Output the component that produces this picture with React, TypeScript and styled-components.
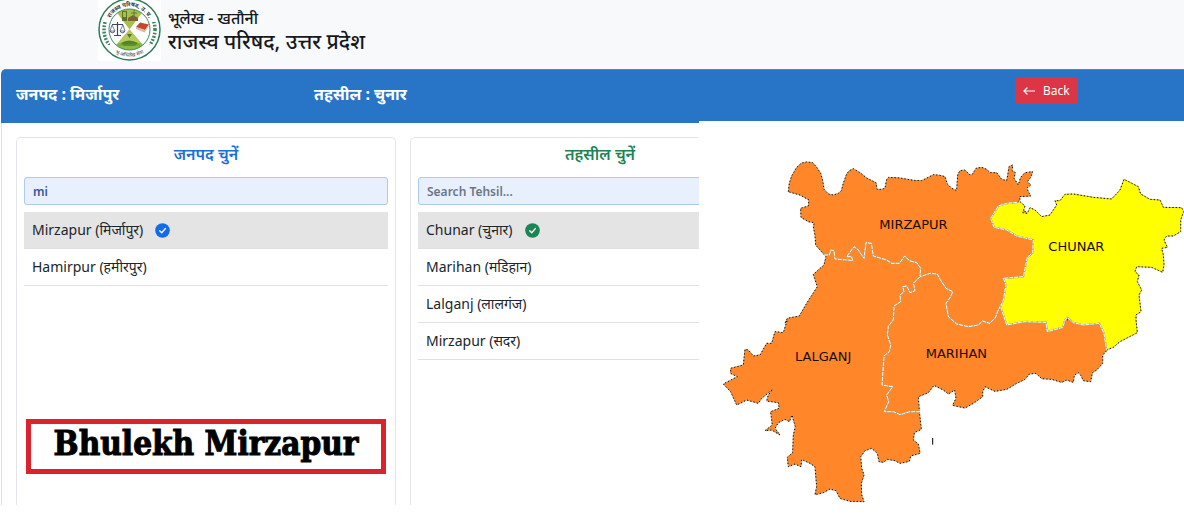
import React, { useState } from "react";
import styled, { createGlobalStyle } from "styled-components";

const GlobalStyle = createGlobalStyle`
  *, *::before, *::after { box-sizing: border-box; }
  body {
    margin: 0;
    background: #ffffff;
    color: #212529;
    font-family: "Noto Sans", "Open Sans", sans-serif;
    font-size: 14px;
  }
`;

const Page = styled.div`
  overflow: hidden;
`;

const Header = styled.header`
  display: flex;
  align-items: flex-start;
  gap: 7px;
  height: 69px;
  padding-left: 98px;
  background: #f8f9fb;
`;

const LogoSvg = styled.svg`
  flex: none;
  width: 63px;
  height: 61px;
  background: #ffffff;
`;

const SiteTitle = styled.div`
  padding-top: 6px;
  color: #16181b;
`;

const Department = styled.p`
  margin: 0;
  font-size: 16px;
  line-height: 24px;
  font-weight: 500;
`;

const Council = styled.h1`
  margin: 0;
  font-size: 21px;
  line-height: 22px;
  font-weight: 500;
`;

const Panel = styled.main`
  position: relative;
  margin-left: 1px;
`;

const Bar = styled.div`
  display: grid;
  grid-template-columns: 298fr 701fr 169fr;
  height: 54px;
  padding: 7px 0 0 15px;
  border-top: 1px solid #4c86c6;
  border-top-left-radius: 5px;
  background: #2874c6;
`;

const Crumb = styled.h2`
  margin: 0;
  color: #ffffff;
  font-size: 16px;
  line-height: 34px;
  font-weight: 700;
`;

const BackButton = styled.button`
  display: flex;
  align-items: center;
  justify-self: start;
  gap: 8px;
  height: 27px;
  padding: 0 8px;
  border: 0;
  border-radius: 3px;
  background: #dc3545;
  color: #ffffff;
  font: 12px/18px "Noto Sans", sans-serif;
`;

const Columns = styled.div`
  display: grid;
  grid-template-columns: repeat(3, 1fr);
  gap: 14px;
  min-height: 382px;
  padding: 14px 0 0 14px;
  border-left: 1px solid #dddfe2;
`;

const Card = styled.section`
  display: flex;
  flex-direction: column;
  padding: 0 7px;
  border: 1px solid #e3e5e8;
  border-bottom: 0;
  border-radius: 5px 5px 0 0;
`;

const CardTitle = styled.h3<{ $tone: string }>`
  margin: 0;
  padding-top: 2px;
  height: 39px;
  color: ${(p) => p.$tone};
  font-size: 16px;
  line-height: 28px;
  font-weight: 600;
  text-align: center;
`;

const Search = styled.input`
  width: 100%;
  height: 28px;
  padding: 0 8px;
  border: 1px solid #accbee;
  border-radius: 3px;
  outline: 0;
  background: #e8f0fe;
  color: #3b5998;
  font: 600 12px/18px "Noto Sans", sans-serif;

  &::placeholder { color: #6a7686; opacity: 1; }
`;

const List = styled.ul`
  margin: 7px 0 0;
  padding: 0;
  list-style: none;
`;

const Option = styled.button<{ $selected: boolean }>`
  display: flex;
  align-items: center;
  gap: 12px;
  width: 100%;
  height: 37px;
  padding: 0 8px;
  border: 0;
  border-bottom: 1px solid #dee2e6;
  background: ${(p) => (p.$selected ? "#e4e4e4" : "#ffffff")};
  color: #212529;
  font: 14px/20px "Noto Sans", sans-serif;
  text-align: left;
`;

const Caption = styled.p`
  margin: auto 2px 31px;
  padding-bottom: 6px;
  border: 5px solid #dc232c;
  color: #000000;
  font-family: "DejaVu Serif Condensed", "DejaVu Serif", serif;
  font-size: 33px;
  line-height: 39px;
  font-weight: 700;
  text-align: center;
  white-space: nowrap;
  -webkit-text-stroke: 1px #000000;
`;

const MapPane = styled.div`
  position: absolute;
  top: 52px;
  right: 0;
  width: 41%;
  background: #ffffff;
`;

const MapSvg = styled.svg`
  display: block;
  width: 100%;
  height: auto;
  font-family: "DejaVu Sans", sans-serif;
  font-size: 39px;
`;

const orangeLand =
  "M268 212L271 187 278 165 293 139 308 126 323 123 341 125 353 139 365 157 371 179 375 205 388 219 403 222 418 217 427 209 433 187 443 159 451 149 463 143 483 155 503 171 531 185 534 205 548 205 558 202 563 175 569 169 603 171 643 178 668 179 688 169 703 161 723 163 738 167 745 189 758 202 773 209 776 162 783 149 798 147 813 162 821 159 831 142 848 139 863 145 873 155 893 155 908 175 923 179 927 157 930 137 941 132 939 149 949 155 945 172 958 192 965 169 978 155 1001 152 995 169 985 182 995 192 983 202 991 217 995 225 961 227 963 237 955 244 1003 300 1040 400 1050 590 1201 607 1208 607 1218 642 1221 677 1223 689 1211 702 1211 727 1193 747 1180 755 1175 782 1153 779 1145 762 1138 755 1126 762 1123 784 1103 777 1088 784 1058 775 1028 773 1011 757 991 759 978 775 953 787 923 805 888 811 858 797 851 812 851 827 823 847 798 861 761 853 771 832 767 807 748 819 733 807 705 793 688 815 658 827 661 872 667 925 646 935 643 957 658 969 663 997 635 1005 631 1021 603 1027 588 1019 565 1015 553 1024 540 1022 535 997 518 982 498 989 485 1007 488 1042 495 1062 487 1087 488 1122 495 1142 453 1141 423 1132 411 1109 393 1104 373 1115 348 1121 353 1097 348 1037 333 1027 308 1015 306 1037 288 1029 268 1037 265 1009 281 995 283 942 289 917 279 882 271 902 258 895 238 905 228 922 243 942 218 927 198 929 220 912 215 872 241 862 238 845 203 840 208 822 221 805 188 832 178 847 143 837 113 852 95 812 73 789 115 767 95 757 95 742 133 732 138 685 148 687 163 705 183 702 203 667 218 667 228 632 253 635 265 597 258 607 265 592 301 585 323 547 355 497 343 460 375 432 381 407 363 387 350 372 348 342 343 317 346 305 328 302 306 289 305 262 328 255 330 237 303 222Z";

const chunarInner =
  "M955 244L923 247 898 255 875 292 885 319 923 327 953 345 1003 357 1001 395 985 409 973 467 913 472 921 492 913 537 905 557 923 612 978 602 1041 604 1045 632 1091 619 1098 597 1106 590 1123 605 1153 612 1201 607 1215 637 1221 677 1223 687";

const chunarOuter =
  "L1243 679 1263 662 1315 635 1311 597 1311 582 1326 572 1323 547 1320 522 1328 507 1315 482 1320 462 1308 452 1313 437 1358 439 1391 454 1395 432 1393 402 1388 382 1405 379 1395 357 1403 345 1423 345 1445 332 1445 297 1454 272 1448 260 1393 259 1383 237 1353 235 1325 219 1318 197 1275 175 1263 207 1238 234 1183 229 1123 219 1098 220 1083 239 1068 239 1073 252 1053 282 1028 287 1008 267 993 260 985 277 971 275 978 255 963 242 955 244";

const innerBorders = [
  "M375 402L391 402 395 387 405 389 408 414 448 417 461 419 458 407 443 407 465 377 478 387 495 412 501 365 517 367 523 405 563 417 578 427 601 427 617 405 631 419 653 425 665 442 663 467 693 457 715 459 723 475 741 502 761 512 755 527 741 547 748 587 773 609 808 617 838 612 851 600 871 607 888 592 898 567 908 547",
  "M663 467L643 487 648 509 633 515 623 495 611 497 615 512 603 522 605 542 585 555 583 597 568 615 565 642 575 672 571 692 555 705 549 792 581 797 563 822 569 842 556 872 583 872 603 881 633 872 663 872",
  chunarInner,
];

const TehsilMap = () => (
  <MapSvg viewBox="0 0 1455 1182" role="img" aria-label="Mirzapur district tehsils">
    <g fill="none" strokeWidth="3">
      <path d={orangeLand} fill="#ff8629" stroke="#c9a070" />
      <path d={orangeLand} stroke="#1a0d05" strokeDasharray="4 6" />
      <path d={chunarInner + chunarOuter + "Z"} fill="#ffff00" stroke="#d0c040" />
      <path d={"M1223 687" + chunarOuter} stroke="#111111" strokeDasharray="4 6" />
      {innerBorders.map((d) => (
        <g key={d}>
          <path d={d} stroke="#a9a78c" strokeWidth="5" />
          <path d={d} stroke="#fff8e0" strokeDasharray="12 3" />
        </g>
      ))}
    </g>
    <g fill="#200b02">
      <text x="541" y="324">MIRZAPUR</text>
      <text x="1048" y="391">CHUNAR</text>
      <text x="288" y="720">LALGANJ</text>
      <text x="680" y="710">MARIHAN</text>
    </g>
    <path d="M701 951V971" stroke="#000000" strokeWidth="3" />
  </MapSvg>
);

const Logo = () => (
  <LogoSvg viewBox="0 0 63 61" role="img" aria-label="राजस्व परिषद">
    <defs>
      <path id="ring-top" d="M12.500 38A21.500 21.500 0 1 1 50.500 38" />
      <path id="ring-bottom" d="M8 43A27 27 0 0 0 55 43" />
      <clipPath id="disc"><circle cx="31.500" cy="29.500" r="20.500" /></clipPath>
      <clipPath id="sides"><path d="M0 22H12V45H0ZM51 22H63V45H51Z" /></clipPath>
    </defs>
    <circle cx="31.500" cy="29.500" r="30.500" fill="#ffffff" stroke="#2c7c5a" strokeWidth="1.500" />
    <g clipPath="url(#disc)">
      <path d="M31.500 29.500L14 6H49Z" fill="#a8bf4c" />
      <path d="M31.500 29.500L12 52H51Z" fill="#8fba3d" />
      <path d="M31.500 29.500L20 43H43Z" fill="#b9c95e" />
    </g>
    <circle cx="31.500" cy="29.500" r="20.500" fill="none" stroke="#3b8a62" />
    <circle cx="31.500" cy="29.500" r="25.500" fill="none" stroke="#39865f" strokeWidth="3.500" strokeDasharray="1.800 1.500" pathLength="160" clipPath="url(#sides)" />
    <g fill="none" stroke="#3c4764">
      <path d="M19.500 22V35M14 24.500H25M16 35.500H23" strokeWidth="1.200" />
      <path d="M14 25L12 31H17ZM25 25L22 31H27Z" strokeWidth="0.700" />
      <path d="M12 31.500Q14.500 34 17 31.500M22 31.500Q24.500 34 27 31.500" />
    </g>
    <path d="M38 27L42 22.500 51 24.500 47 30Z" fill="#c04a2e" />
    <path d="M38 27V29L46.500 32.500 51 26V24.500L47 30Z" fill="#e6b49a" />
    <path d="M24 11H29V21H24ZM25 12V17H28V12Z" fill="#5d7428" fillRule="evenodd" />
    <path d="M30 18L35 15 40 18V21H30Z" fill="#7b6332" />
    <path d="M36 10V17M33 13H39" stroke="#5d8030" />
    <path d="M29 34H34L31.500 38Z" fill="#557a25" />
    <path d="M23 43Q31 38 40 43L37 46H26Z" fill="#4e8526" />
    <path d="M21 45H42" stroke="#739c2e" />
    <g fill="#2b3d43" fontFamily="Noto Sans, sans-serif" textAnchor="middle">
      <text fontSize="6" fontWeight="700"><textPath href="#ring-top" startOffset="50%">राजस्व परिषद, उ. प्र.</textPath></text>
      <text fontSize="5"><textPath href="#ring-bottom" startOffset="50%">भू-अभिलेख सेवा</textPath></text>
    </g>
  </LogoSvg>
);

const CheckBadge = ({ color }: { color: string }) => (
  <svg width="15" height="15" viewBox="0 0 15 15" aria-hidden="true">
    <circle cx="7.500" cy="7.500" r="7.300" fill={color} />
    <path d="M4.700 7.700L6.700 9.700L10.400 5.500" fill="none" stroke="#ffffff" strokeWidth="1.300" strokeLinecap="round" strokeLinejoin="round" />
  </svg>
);

const BackArrow = () => (
  <svg width="12" height="10" viewBox="0 0 12 10" aria-hidden="true">
    <path d="M11.500 5H1M4 2L1 5L4 8" fill="none" stroke="#ffffff" strokeWidth="1.200" strokeLinecap="round" strokeLinejoin="round" />
  </svg>
);

type PickerProps = {
  title: string;
  tone: string;
  badge: string;
  query?: string;
  placeholder: string;
  options: string[];
  children?: React.ReactNode;
};

const Picker = ({ title, tone, badge, query = "", placeholder, options, children }: PickerProps) => {
  const [text, setText] = useState(query);
  const [selected, setSelected] = useState(options[0]);
  return (
    <Card>
      <CardTitle $tone={tone}>{title}</CardTitle>
      <Search
        type="text"
        aria-label={title}
        value={text}
        placeholder={placeholder}
        onChange={(e) => setText(e.target.value)}
      />
      <List>
        {options.map((name) => (
          <li key={name}>
            <Option type="button" $selected={name === selected} aria-pressed={name === selected} onClick={() => setSelected(name)}>
              {name}
              {name === selected && <CheckBadge color={badge} />}
            </Option>
          </li>
        ))}
      </List>
      {children}
    </Card>
  );
};

export default function App() {
  return (
    <Page>
      <GlobalStyle />
      <Header>
        <Logo />
        <SiteTitle>
          <Department>भूलेख - खतौनी</Department>
          <Council>राजस्व परिषद, उत्तर प्रदेश</Council>
        </SiteTitle>
      </Header>
      <Panel>
        <Bar>
          <Crumb>जनपद : मिर्जापुर</Crumb>
          <Crumb>तहसील : चुनार</Crumb>
          <BackButton type="button">
            <BackArrow />
            Back
          </BackButton>
        </Bar>
        <Columns>
          <Picker
            title="जनपद चुनें"
            tone="#1b6fd8"
            badge="#146bea"
            query="mi"
            placeholder="Search District..."
            options={["Mirzapur (मिर्जापुर)", "Hamirpur (हमीरपुर)"]}
          >
            <Caption>Bhulekh Mirzapur</Caption>
          </Picker>
          <Picker
            title="तहसील चुनें"
            tone="#1f8354"
            badge="#1b8554"
            placeholder="Search Tehsil..."
            options={["Chunar (चुनार)", "Marihan (मडिहान)", "Lalganj (लालगंज)", "Mirzapur (सदर)"]}
          />
        </Columns>
        <MapPane>
          <TehsilMap />
        </MapPane>
      </Panel>
    </Page>
  );
}
